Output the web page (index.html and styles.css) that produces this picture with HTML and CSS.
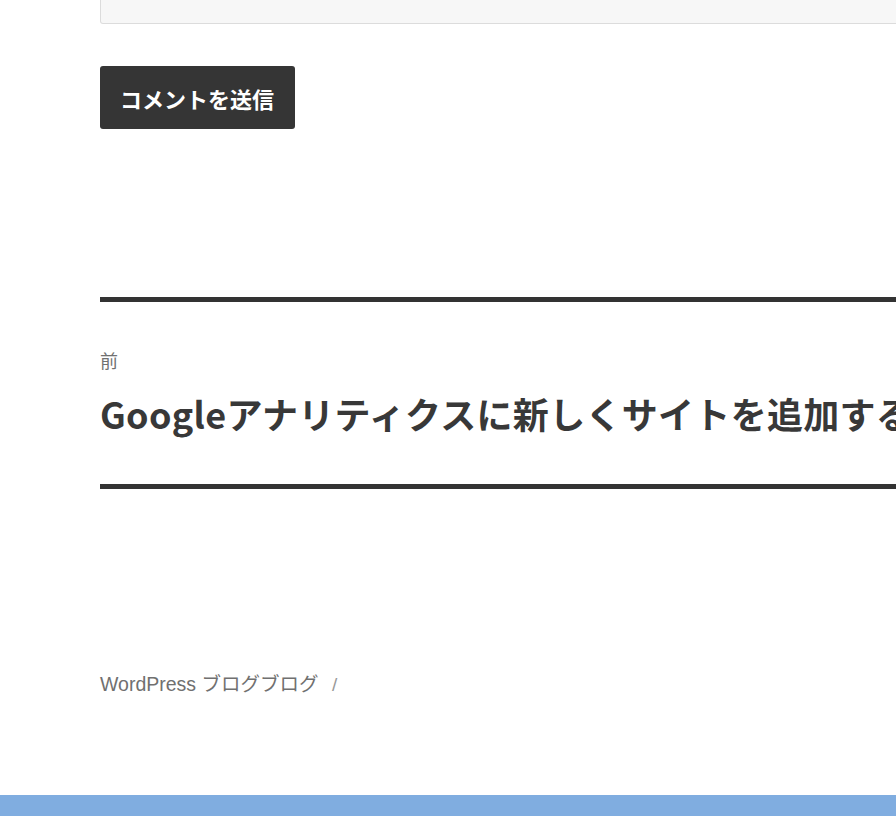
FILE: index.html
```html
<!DOCTYPE html>
<html lang="ja">
<head>
    <meta charset="UTF-8">
    <title>WordPress ブログブログ</title>
    <link rel="stylesheet" href="styles.css">
</head>
<body>
    <div class="site">
        <div class="comment-form">
            <div class="comment-textarea"></div>
            <button class="submit">コメントを送信</button>
        </div>

        <nav class="post-navigation">
            <div class="nav-previous">
                <span class="meta-nav">前</span>
                <span class="post-title">Googleアナリティクスに新しくサイトを追加する方法</span>
            </div>
        </nav>

        <footer class="site-footer">
            <a class="site-name" href="#">WordPress ブログブログ</a>
            <span class="sep">/</span>
        </footer>
    </div>
    <div class="bottom-bar"></div>
</body>
</html>
```

FILE: styles.css
```css
/* 全体 */
html, body {
    margin: 0;
    padding: 0;
    overflow: hidden;
}
body {
    background: #fff;
    font-family: "Liberation Sans", "Noto Sans CJK JP", sans-serif;
    color: #333;
    width: 896px;
    height: 816px;
}

.site {
    padding-left: 100px;
    width: 1100px;
    height: 795px;
}

/* コメント欄 */
.comment-textarea {
    height: 23px;
    background: #f7f7f7;
    border: 1px solid #dcdcdc;
    border-top: none;
    border-radius: 0 0 3px 3px;
}

.submit {
    display: block;
    margin-top: 42px;
    height: 63px;
    padding: 0 21px 0 20px;
    background: #353535;
    color: #fff;
    border: none;
    border-radius: 3px;
    font-family: "Noto Sans CJK JP", sans-serif;
    font-size: 22px;
    font-weight: bold;
    cursor: pointer;
}

/* 前後の投稿 */
.post-navigation {
    margin-top: 168px;
    border-top: 5px solid #333;
    border-bottom: 5px solid #333;
    height: 182px;
}
.nav-previous {
    padding-top: 46px;
}
.meta-nav {
    display: block;
    font-family: "Noto Sans CJK JP", sans-serif;
    font-size: 18px;
    line-height: 24px;
    color: #707070;
}
.post-title {
    display: block;
    margin-top: 19px;
    font-family: "Noto Sans CJK JP", sans-serif;
    font-size: 36px;
    line-height: 44px;
    font-weight: bold;
    letter-spacing: 0.3px;
    color: #383838;
    white-space: nowrap;
}

/* フッター */
.site-footer {
    margin-top: 182px;
    font-size: 19.5px;
    line-height: 26px;
    color: #707070;
}
.site-name {
    color: #707070;
    text-decoration: none;
}
.sep {
    margin-left: 8px;
    font-size: 19px;
    color: #999;
}

.bottom-bar {
    height: 21px;
    background: #80ade0;
}
```
